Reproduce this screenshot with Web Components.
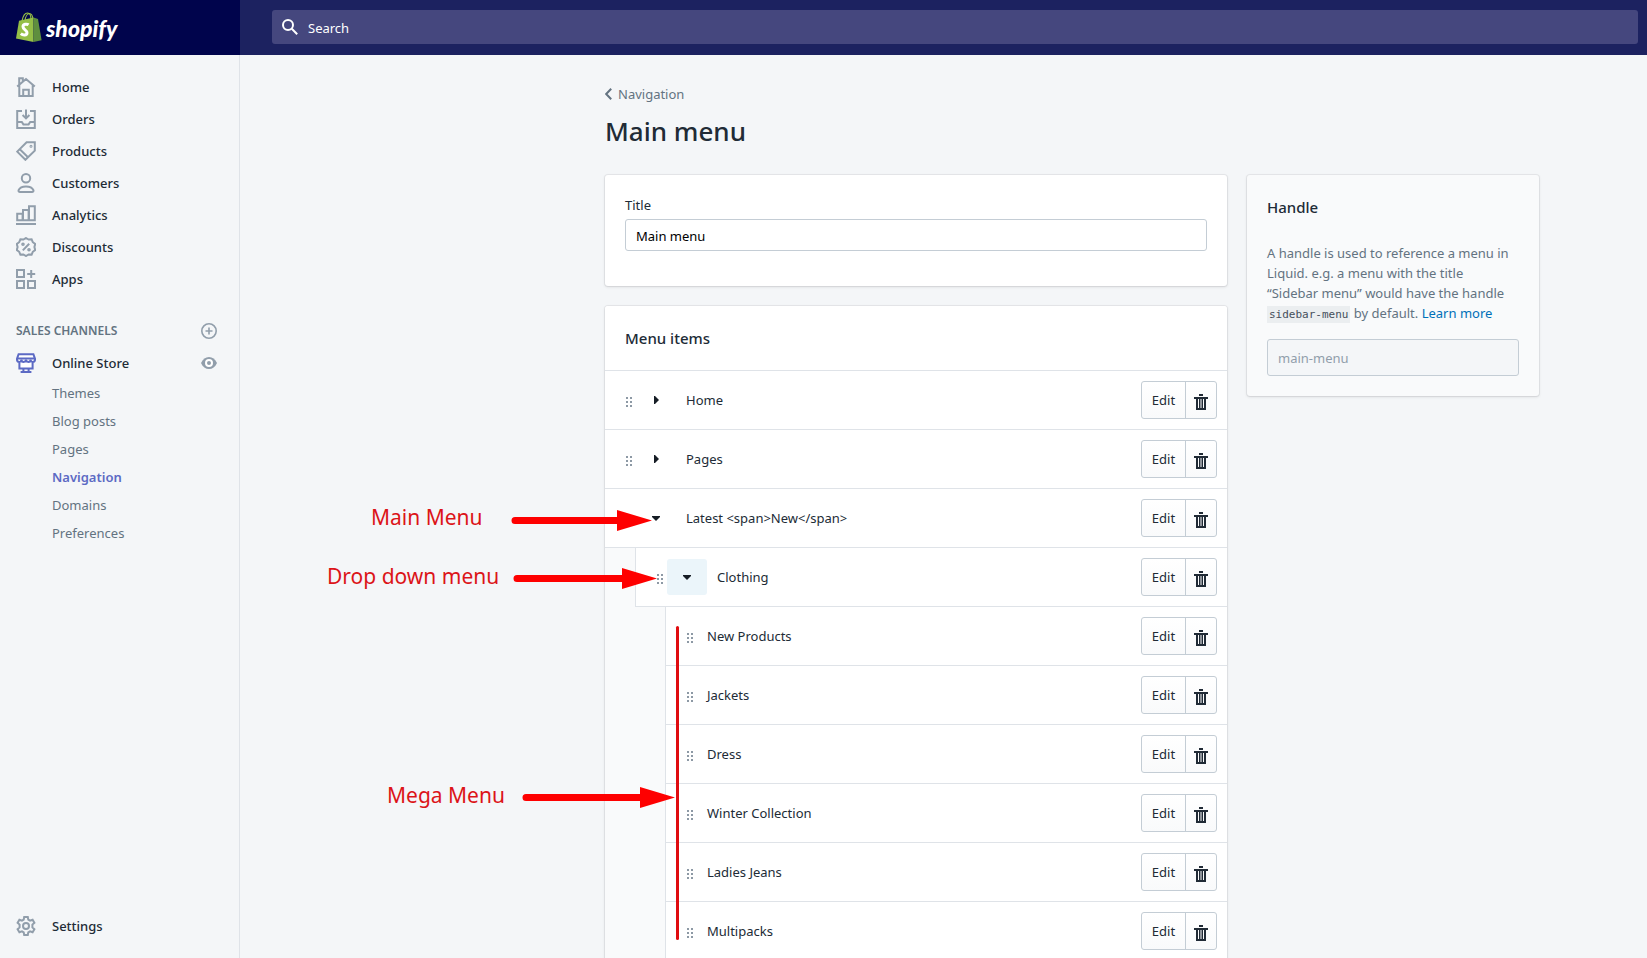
<!DOCTYPE html>
<html lang="en">
<head>
<meta charset="utf-8">
<title>Main menu - Navigation - Shopify</title>
<style>
  html, body { margin: 0; height: 100%; }
  body {
    font: 400 13px/20px "Noto Sans", "Open Sans", sans-serif;
    color: #212b36;
    background: #f4f6f8;
    overflow: hidden;
  }
</style>
</head>
<body>
<admin-frame>
  <top-bar slot="top"></top-bar>
  <side-nav slot="nav">
    <nav-item icon="home">Home</nav-item>
    <nav-item icon="orders">Orders</nav-item>
    <nav-item icon="products">Products</nav-item>
    <nav-item icon="customers">Customers</nav-item>
    <nav-item icon="analytics">Analytics</nav-item>
    <nav-item icon="discounts">Discounts</nav-item>
    <nav-item icon="apps">Apps</nav-item>
    <nav-heading>SALES CHANNELS</nav-heading>
    <nav-item icon="store" current action="view">Online Store</nav-item>
    <nav-item sub>Themes</nav-item>
    <nav-item sub>Blog posts</nav-item>
    <nav-item sub>Pages</nav-item>
    <nav-item sub selected>Navigation</nav-item>
    <nav-item sub>Domains</nav-item>
    <nav-item sub>Preferences</nav-item>
    <nav-item icon="settings" slot="footer">Settings</nav-item>
  </side-nav>
  <admin-page heading="Main menu" parent="Navigation">
    <title-card value="Main menu"></title-card>
    <menu-card heading="Menu items">
      <menu-row level="1" toggle="closed" drag>Home</menu-row>
      <menu-row level="1" toggle="closed" drag>Pages</menu-row>
      <menu-row level="1" toggle="open">Latest &lt;span&gt;New&lt;/span&gt;</menu-row>
      <menu-row level="2" toggle="open" drag active>Clothing</menu-row>
      <menu-row level="3" drag>New Products</menu-row>
      <menu-row level="3" drag>Jackets</menu-row>
      <menu-row level="3" drag>Dress</menu-row>
      <menu-row level="3" drag>Winter Collection</menu-row>
      <menu-row level="3" drag>Ladies Jeans</menu-row>
      <menu-row level="3" drag>Multipacks</menu-row>
      <call-outs slot="overlay"></call-outs>
    </menu-card>
    <handle-card slot="aside" heading="Handle" value="main-menu"></handle-card>
  </admin-page>
</admin-frame>

<script>
const define = (name, render) => customElements.define(name, class extends HTMLElement {
  connectedCallback() {
    if (this.shadowRoot) return;
    this.attachShadow({ mode: 'open' }).innerHTML =
      '<style>*{box-sizing:border-box}</style>' + render(this);
  }
});

const ICONS = {
  home: '<path d="M1.2 9.6 10 2l8.8 7.6M3.3 8V19h13.4V8M7.2 19v-6.2h5.6V19M3.2 7.6V1.2h3.6v3"/>',
  orders: '<path d="M6 2H1.2v17h17.6V2H14M1.2 13h4.6l1.6 2.4h5.2l1.6-2.4h4.6M10 .6v8.6M6.6 6 10 9.4 13.4 6"/>',
  products: '<path d="M10.6 1.2h8.2v8.4l-9.4 9.2-8.2-8.2zM3.8 8.2l8.2 8"/><circle cx="15" cy="5.2" r=".5"/>',
  customers: '<circle cx="10" cy="5.2" r="4.2"/><path d="M4 19h12c1.2 0 1.8-.8 1.4-1.8-1-2.4-3.6-3.8-7.4-3.8s-6.400 1.400-7.400 3.800C2.200 18.200 2.800 19 4 19z"/>',
  analytics: '<path d="M1.200 15V8.800h5.400V15M7 15V5h5.600V15M13 15V1.200h5.800V15.200H1.200V15M0 19h20"/>',
  discounts: '<path d="M10 1l2.600 1.600 3-.2 1.200 2.800 2.400 1.800-.8 3 .8 3-2.400 1.800-1.200 2.800-3-.2L10 19l-2.600-1.600-3 .2-1.200-2.800L.8 13l.8-3-.8-3 2.400-1.800 1.200-2.800 3 .2zM6.800 13.400l6.400-6.600"/><circle cx="7" cy="7.200" r=".8"/><circle cx="13" cy="12.800" r=".8"/>',
  apps: '<path d="M1 1h7v7H1zM1 12h7v7H1zM12 12h7v7h-7zM15.200 1v8M11.200 5h8"/>',
  store: '<path d="M2.600 1.200h14.800l1.600 4.400v1.200c0 2.800-4.200 2.800-4.400 0 0 2.800-4.500 2.800-4.600 0-.1 2.800-4.600 2.800-4.600 0-.2 2.800-4.400 2.800-4.400 0V5.600zM1.400 5.400h17.200M3.400 9v6.400h13.200V9M7.400 15.400V18.400M12.600 15.400v3M4.600 19h10.800"/>',
  settings: '<circle cx="10" cy="10" r="3"/><path d="M8.200 1h3.600l.5 2.700 1.700 1 2.600-1 1.800 3.100-2 1.800v2.800l2 1.800-1.800 3.100-2.600-1-1.700 1-.5 2.700H8.200l-.5-2.700-1.700-1-2.600 1-1.800-3.100 2-1.800V8.600l-2-1.800 1.800-3.100 2.600 1 1.700-1z"/>'
};

define('admin-frame', () => `
  <style>
    :host { display: grid; grid-template: 55px minmax(0, 1fr) / 240px minmax(0, 1fr); height: 100vh; }
    header { grid-column: 1 / -1; display: grid; }
    nav, main { min-height: 0; display: grid; }
    main { overflow: hidden; align-items: start; }
  </style>
  <header><slot name="top"></slot></header>
  <nav aria-label="Admin"><slot name="nav"></slot></nav>
  <main><slot></slot></main>`);

define('top-bar', () => `
  <style>
    :host { display: flex; background: #1c2260; }
    .brand { flex: 0 0 240px; display: flex; align-items: center; gap: 4px; padding-left: 16px;
      background: #00044c; color: #fff; text-decoration: none;
      font: italic 900 23px/32px Lato, "Noto Sans", sans-serif; }
    .brand svg { flex: none; margin-bottom: 2px; }
    .search { flex: 1; display: flex; align-items: center; gap: 10px; height: 34px;
      margin: 10px 9px 10px 32px; padding: 0 10px; border-radius: 3px; background: #45477e; color: #fff; }
    input { flex: 1; min-width: 0; border: 0; padding: 2px 0 0; outline: 0; background: none; color: inherit;
      font: inherit; }
    input::placeholder { color: #fff; opacity: 1; }
  </style>
  <a class="brand" href="#">
    <svg width="26" height="30" viewBox="0 0 26 30" aria-hidden="true">
      <path d="M6 9c1-5 3-8 5.500-8S15 4 15 8M9 8.500c.5-4 2.500-7 4.500-7s3 2 3.500 5.500" fill="none" stroke="#95bf47" stroke-width="1.200"/>
      <path d="M3 8.800 17.500 5.500V30L0 26.600z" fill="#95bf47"/>
      <path d="M17.500 5.500 22 7l3.600 21.200-8.100 1.800z" fill="#5e8e3e"/>
      <path d="M12.600 12.800c-1.500-1-5.600-1-5.600 2 0 2.900 4.200 3.200 4 6-.2 2.600-3.800 2.800-6.200.8" fill="none" stroke="#fff" stroke-width="3"/>
    </svg>
    <span>shopify</span>
  </a>
  <label class="search">
    <svg width="16" height="16" viewBox="0 0 16 16" fill="none" stroke="#fff" stroke-width="2" aria-hidden="true"><circle cx="6" cy="6" r="5"/><path d="m9.800 9.800 5.400 5.400"/></svg>
    <input type="search" placeholder="Search" aria-label="Search">
  </label>`);

define('side-nav', () => `
  <style>
    :host { display: flex; flex-direction: column; justify-content: space-between;
      padding: 16px 0; border-right: 1px solid #dfe3e8; }
  </style>
  <div><slot></slot></div>
  <div><slot name="footer"></slot></div>`);

define('nav-item', el => `
  <style>
    :host { display: flex; align-items: center; height: 32px; padding: 0 22px 0 16px; }
    :host([sub]) { height: 28px; padding-left: 52px; }
    a { flex: 1; display: flex; align-items: center; gap: 16px; color: #212b36; text-decoration: none; font-weight: 500; }
    :host([sub]) a { color: #637381; font-weight: 400; }
    :host([selected]) a { color: #5c6ac4; font-weight: 600; }
    svg { flex: none; fill: none; stroke: #919eab; stroke-width: 2; }
    :host([current]) a svg { stroke: #5c6ac4; fill: #fff; }
    button { display: flex; padding: 0; border: 0; background: none; }
  </style>
  <a href="#">${el.hasAttribute('icon') ? `<svg width="20" height="20" viewBox="0 0 20 20" aria-hidden="true">${ICONS[el.getAttribute('icon')]}</svg>` : ''}<span><slot></slot></span></a>
  ${el.hasAttribute('action') ? `<button aria-label="View your online store"><svg width="16" height="16" viewBox="0 0 16 16"><path d="M0 8c1.800-4 4.600-6 8-6s6.200 2 8 6c-1.800 4-4.600 6-8 6S1.800 12 0 8z" fill="#919eab" stroke="none"/><circle cx="8" cy="8" r="3" fill="#919eab" stroke="#fff" stroke-width="2"/></svg></button>` : ''}`);

define('nav-heading', () => `
  <style>
    :host { display: flex; align-items: center; justify-content: space-between; height: 32px;
      margin-top: 20px; padding: 0 22px 0 16px; color: #637381; }
    h2 { margin: 0; font-size: 12px; font-weight: 600; }
    button { display: flex; padding: 0; border: 0; background: none; }
  </style>
  <h2><slot></slot></h2>
  <button aria-label="Add sales channel"><svg width="16" height="16" viewBox="0 0 16 16" fill="none" stroke="#919eab" stroke-width="1.600"><circle cx="8" cy="8" r="7.200"/><path d="M8 4.500v7M4.500 8h7"/></svg></button>`);

define('admin-page', el => `
  <style>
    :host { display: block; width: 100%; max-width: 934px; box-sizing: border-box;
      margin: 28px 108px 0 auto; justify-self: end; }
    .back { display: inline-flex; align-items: center; gap: 6px; height: 22px; color: #637381; text-decoration: none; }
    h1 { margin: 6px 0 24px; font-size: 26px; line-height: 40px; font-weight: 500; }
    .layout { display: grid; grid-template-columns: minmax(0, 622fr) minmax(0, 292fr); gap: 20px; align-items: start; }
    .primary { display: grid; gap: 20px; }
  </style>
  <a class="back" href="#"><svg width="7" height="12" viewBox="0 0 7 12" fill="none" stroke="#637381" stroke-width="2" aria-hidden="true"><path d="M6.200.8 1.200 6l5 5.200"/></svg><span>${el.getAttribute('parent')}</span></a>
  <h1>${el.getAttribute('heading')}</h1>
  <div class="layout"><div class="primary"><slot></slot></div><slot name="aside"></slot></div>`);

const CARD = `display: block; border-radius: 3px; background: #fff;
  box-shadow: 0 0 0 1px rgba(63,63,68,.07), 0 1px 3px rgba(63,63,68,.15);`;

define('title-card', el => `
  <style>
    :host { ${CARD} box-sizing: border-box; padding: 20px 20px 35px; }
    label { display: block; margin-bottom: 4px; }
    input { display: block; width: 100%; height: 32px; padding: 2px 10px 0; border: 1px solid #c4cdd5;
      border-radius: 3px; background: #fff; font: inherit; color: #000; }
  </style>
  <label for="title">Title</label>
  <input id="title" type="text" value="${el.getAttribute('value')}">`);

define('handle-card', el => `
  <style>
    :host { ${CARD} box-sizing: border-box; padding: 20px; background: #f9fafb; }
    h2 { margin: 0 0 24px; font-size: 15px; line-height: 24px; font-weight: 500; }
    p { margin: 0 0 16px; color: #637381; }
    q, code { white-space: nowrap; }
    q { quotes: none; }
    code { padding: 2px; background: #ebeef0; color: #454f5b; font: 11px/16px "DejaVu Sans Mono", monospace; }
    a { color: #0070b8; text-decoration: none; }
    input { display: block; width: 100%; height: 37px; padding: 0 10px; border: 1px solid #c4cdd5;
      border-radius: 3px; background: #f4f6f8; color: #919eab; font: inherit; }
  </style>
  <h2>${el.getAttribute('heading')}</h2>
  <p>A handle is used to reference a menu in Liquid. e.g. a menu with the title <q>“Sidebar menu”</q> would have the handle <code>sidebar-menu</code> by default. <a href="#">Learn more</a></p>
  <input type="text" aria-label="Handle" disabled value="${el.getAttribute('value')}">`);

define('menu-card', el => `
  <style>
    :host { ${CARD} position: relative; background: #f9fafb; }
    h2 { margin: 0; padding: 20px; border-bottom: 1px solid #dfe3e8; border-radius: 3px 3px 0 0;
      background: #fff; font-size: 15px; line-height: 24px; font-weight: 500; }
  </style>
  <h2>${el.getAttribute('heading')}</h2>
  <slot></slot>
  <slot name="overlay"></slot>`);

define('menu-row', el => {
  const toggle = el.getAttribute('toggle');
  const caret = toggle === 'open' ? 'M0 0h8v1L4 5 0 1z' : 'M0 0h1l4 4-4 4H0z';
  const size = toggle === 'open' ? [8, 5] : [5, 8];
  return `
  <style>
    :host { display: flex; align-items: center; height: 59px; box-sizing: border-box;
      padding: 0 10px 0 21px; border-bottom: 1px solid #dfe3e8; background: #fff; }
    :host([level="2"]) { margin-left: 30px; border-left: 1px solid #dfe3e8; }
    :host([level="3"]) { margin-left: 60px; border-left: 1px solid #dfe3e8; }
    .drag { flex: none; width: 6px; height: 10px; margin-top: 3px; }
    .toggle { display: grid; place-items: center; width: 40px; height: 36px; margin-left: 4px; padding: 0;
      border: 0; border-radius: 3px; background: none; }
    :host([active]) .toggle { background: #ebf5fa; }
    .name { flex: 1; margin-left: 10px; }
    :host([level="3"]) .name { margin-left: 14px; }
    .actions { display: flex; height: 38px; border: 1px solid #c4cdd5; border-radius: 3px;
      background: linear-gradient(#fff, #f9fafb); }
    .actions button { display: grid; place-items: center; width: 43px; padding: 0; border: 0;
      background: none; font: inherit; color: #212b36; }
    .actions button + button { width: 31px; border-left: 1px solid #c4cdd5; padding-top: 3px; }
  </style>
  <svg class="drag" viewBox="0 0 6 10" fill="#8d99a5" aria-hidden="true">${el.hasAttribute('drag') ? '<path d="M0 0h2v2H0zM4 0h2v2H4zM0 4h2v2H0zM4 4h2v2H4zM0 8h2v2H0zM4 8h2v2H4z"/>' : ''}</svg>
  ${toggle ? `<button class="toggle" aria-label="Toggle sub-items" aria-expanded="${toggle === 'open'}"><svg width="${size[0]}" height="${size[1]}" fill="#161d25"><path d="${caret}"/></svg></button>` : ''}
  <span class="name"><slot></slot></span>
  <span class="actions"><button>Edit</button><button aria-label="Delete"><svg width="14" height="16" viewBox="0 0 14 16" fill="#212b36"><path fill-rule="evenodd" d="M5 0h4v2H5zM0 3h14v2h-2v11H2V5H0zM4 5v9h1V5zM6.500 5v9h1V5zM9 5v9h1V5z"/></svg></button></span>`;
});

/* Tutorial notes that point at the three menu levels, hung from the menu card. */
define('call-outs', () => `
  <style>
    :host { position: absolute; left: -280px; top: 190px; width: 360px; height: 450px; pointer-events: none;
      color: #dc1418; font: 400 21px/28px "Noto Sans", sans-serif; }
    svg { position: absolute; inset: 0; }
    span { position: absolute; white-space: nowrap; }
    .main { left: 46px; top: 7px; }
    .drop { left: 2px; top: 66px; }
    .mega { left: 62px; top: 285px; }
  </style>
  <svg width="360" height="450" viewBox="325 496 360 450" fill="#fe0000" stroke="#fe0000" stroke-width="7" stroke-linecap="round" aria-hidden="true">
    <path d="M515 520.500H620M517 578.500H625M526 797.500H644"/>
    <path stroke="none" d="M617 510v21l35-10.500zM622 568v21l35-10.500zM640 787v21l35-10.500z"/>
    <path d="M677.500 627.500V938.500" stroke="#e00c10" stroke-width="3"/>
  </svg>
  <span class="main">Main Menu</span>
  <span class="drop">Drop down menu</span>
  <span class="mega">Mega Menu</span>`);
</script>
</body>
</html>
